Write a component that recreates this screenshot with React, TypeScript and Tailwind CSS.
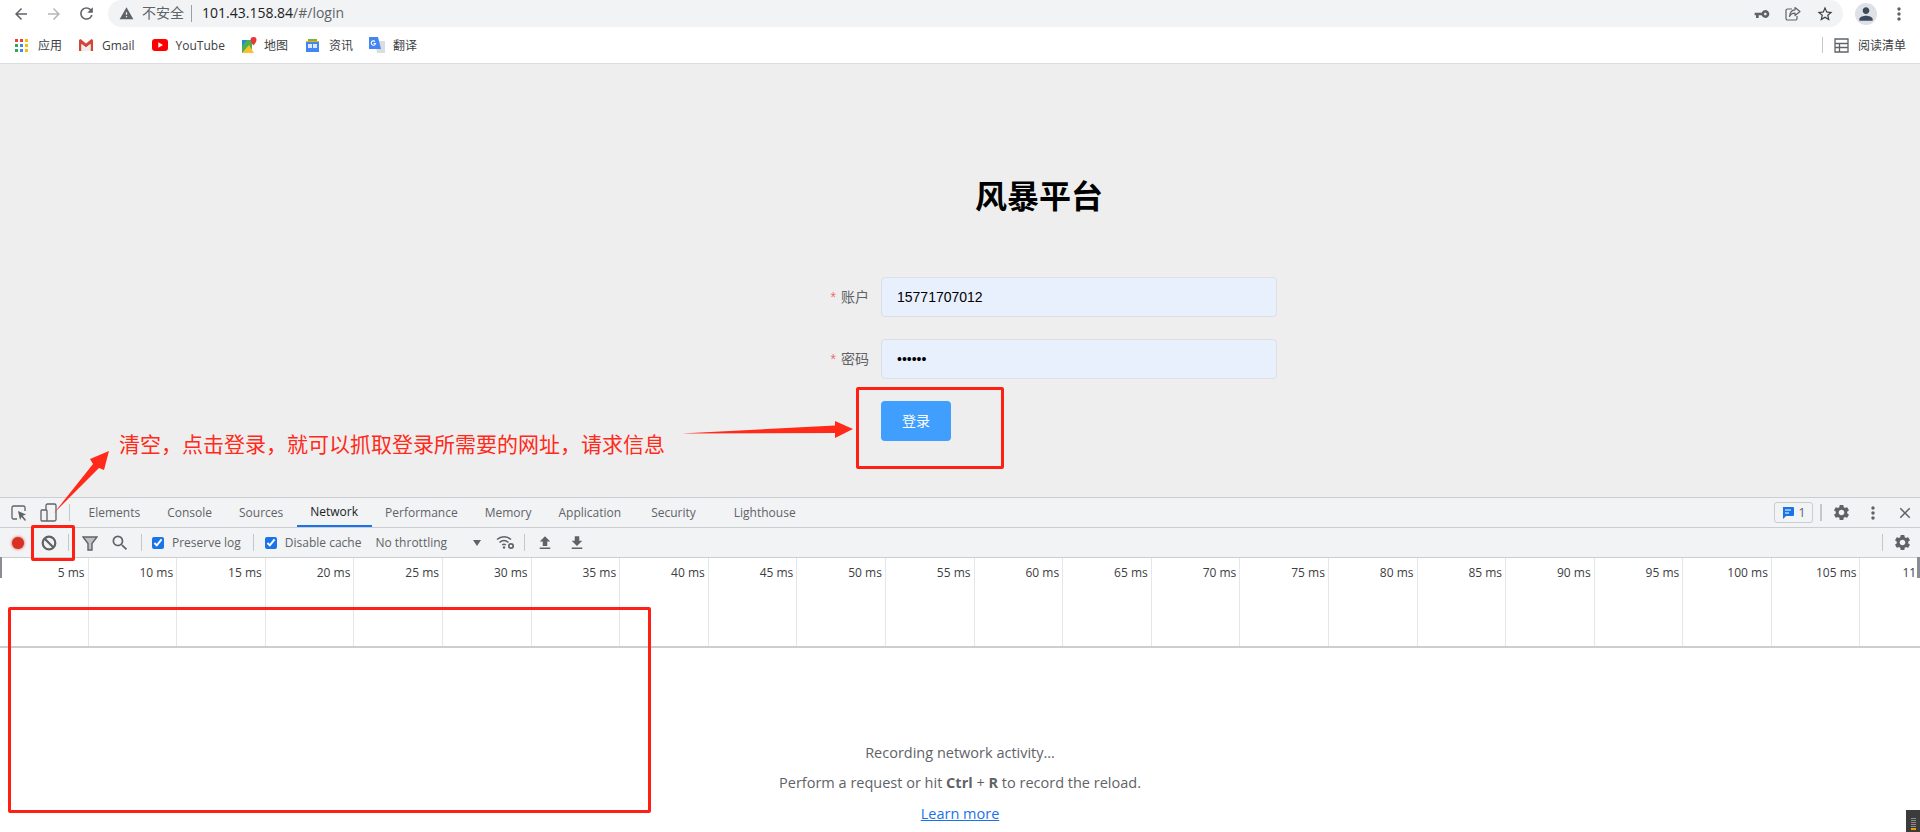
import { MdArrowBack, MdArrowForward, MdRefresh, MdWarning, MdVpnKey, MdStarBorder, MdPerson, MdSettings, MdMoreVert, MdClose, MdSearch, MdFileUpload, MdFileDownload } from "react-icons/md"

const tabs = [
  { label: "Elements", className: "" },
  { label: "Console", className: "" },
  { label: "Sources", className: "" },
  { label: "Network", className: "text-[#202124] border-b-2 border-[#1a73e8]" },
  { label: "Performance", className: "" },
  { label: "Memory", className: "" },
  { label: "Application", className: "" },
  { label: "Security", className: "ml-[3px]" },
  { label: "Lighthouse", className: "ml-[11px]" },
]

const ticks = [5, 10, 15, 20, 25, 30, 35, 40, 45, 50, 55, 60, 65, 70, 75, 80, 85, 90, 95, 100, 105]

function GmailIcon() {
  return (
    <svg width="16" height="14" viewBox="0 0 16 14">
      <path d="M1 2v11h2.500V6L8 9.500 12.500 6v7H15V2l-1.500-1L8 5.500 2.500 1z" fill="#d44638" />
      <path d="M3.500 6 8 9.500 12.500 6v7h-9z" fill="#eee" />
    </svg>
  )
}

function YoutubeIcon() {
  return (
    <svg width="16" height="12" viewBox="0 0 16 12">
      <rect width="16" height="12" rx="3" fill="#f00" />
      <path d="M6.300 3.300v5.400L11 6z" fill="#fff" />
    </svg>
  )
}

function MapsIcon() {
  return (
    <svg width="16" height="17" viewBox="0 0 16 17">
      <path d="M1 3h10v13H1z" fill="#4caf50" />
      <path d="M1 16 8 8l5 8z" fill="#fbc02d" />
      <path d="M1 3h5L1 9z" fill="#1e88e5" />
      <path d="M12.500 0a3 3 0 0 0-3 3c0 2.200 3 5.500 3 5.500s3-3.300 3-5.500a3 3 0 0 0-3-3z" fill="#e53935" />
    </svg>
  )
}

function NewsIcon() {
  return (
    <svg width="15" height="15" viewBox="0 0 15 15">
      <path d="M3 1h9v3H3z" fill="#7cb342" />
      <path d="M1 4h13v10H1z" fill="#4285f4" />
      <path d="M3 6h4v4H3zM8 6h4v4H8z" fill="#dbe8fd" />
      <path d="M1 3h13v1H1z" fill="#f9ab00" />
    </svg>
  )
}

function TranslateIcon() {
  return (
    <svg width="16" height="16" viewBox="0 0 16 16">
      <path d="M6 4h10v12H8z" fill="#dadce0" />
      <path d="M0 0h9l3 12H0z" fill="#4285f4" />
      <path d="M6 4.500a2.200 2.200 0 1 0 .6 2H4.600" fill="none" stroke="#fff" strokeWidth="1.100" />
    </svg>
  )
}

function AppsIcon() {
  const colors = ["#ea4335", "#ea4335", "#fbbc04", "#34a853", "#4285f4", "#fbbc04", "#34a853", "#4285f4", "#fbbc04"]
  return (
    <div className="grid grid-cols-3 gap-[2px] w-[13px]">
      {colors.map((c, i) => (
        <span key={i} className="block w-[3px] h-[3px]" style={{ background: c }} />
      ))}
    </div>
  )
}

function Bookmark({ icon, label, className }: { icon: React.ReactNode; label: string; className: string }) {
  return (
    <div className={`flex items-center ${className}`}>
      {icon}
      <span className="translate-y-px">{label}</span>
    </div>
  )
}

function ShareIcon() {
  return (
    <svg width="16" height="16" viewBox="0 0 16 16" fill="none" stroke="#5f6368" strokeWidth="1.200">
      <path d="M7 3H2.500A1.500 1.500 0 0 0 1 4.500v8A1.500 1.500 0 0 0 2.500 14h8a1.500 1.500 0 0 0 1.500-1.500V10" />
      <path d="M10 1.500 15 5.500l-5 4V7.200C7.500 7.200 5.500 8.200 4.500 10.500 4.800 7 6.800 4 10 3.800z" strokeLinejoin="round" />
    </svg>
  )
}

function InspectIcon() {
  return (
    <svg width="16" height="16" viewBox="0 0 16 16" fill="none">
      <path d="M6 14H2.500A1.500 1.500 0 0 1 1 12.500v-10A1.500 1.500 0 0 1 2.500 1h10A1.500 1.500 0 0 1 14 2.500V6" stroke="#5f6368" strokeWidth="1.300" />
      <path d="M7 6l8 3.500-3.300 1.200L15 15l-1 1-3.500-4L9 15z" fill="#5f6368" />
    </svg>
  )
}

function DeviceIcon() {
  return (
    <svg width="17" height="19" viewBox="0 0 17 19" fill="none" stroke="#5f6368" strokeWidth="1.300">
      <rect x="6" y="1" width="10" height="17" rx="1.500" />
      <rect x="1" y="7" width="6" height="11" rx="1" fill="#f1f3f4" />
    </svg>
  )
}

function ClearIcon() {
  return (
    <svg width="16" height="16" viewBox="0 0 16 16" fill="none" stroke="#5f6368" strokeWidth="2.200">
      <circle cx="8" cy="8" r="6.300" />
      <path d="M3.500 3.500l9 9" />
    </svg>
  )
}

function FunnelIcon() {
  return (
    <svg width="16" height="16" viewBox="0 0 16 16" fill="none">
      <path d="M1 2h14l-5 6.500V15H6V8.500z" stroke="#5f6368" strokeWidth="1.400" fill="#bdc1c6" />
    </svg>
  )
}

function WifiGearIcon() {
  return (
    <svg width="19" height="15" viewBox="0 0 19 15" fill="none">
      <path d="M1 4.500C5 .8 11 .8 15 4.500M3.500 7.500c2.800-2.500 6.200-2.500 9 0M6.200 10c1.200-1 2.400-1 3.600 0" stroke="#5f6368" strokeWidth="1.600" />
      <circle cx="8" cy="12.500" r="1.200" fill="#5f6368" />
      <circle cx="15" cy="11" r="2.200" stroke="#5f6368" strokeWidth="1.700" />
    </svg>
  )
}

function Sep({ className }: { className: string }) {
  return <div className={`w-px h-[17px] bg-[#c4c7cc] shrink-0 ${className}`} />
}

export default function App() {
  return (
    <div className="relative w-[1920px] h-[832px] overflow-hidden bg-white [font-family:'Open_Sans','Noto_Sans_CJK_SC',sans-serif] text-[#3c4043]">
      {/* Browser toolbar */}
      <div className="flex items-center h-[27px] bg-white">
        <MdArrowBack className="ml-[12px] text-[#5f6368]" size={18} />
        <MdArrowForward className="ml-[15px] text-[#b4b7bb]" size={18} />
        <MdRefresh className="ml-[14px] text-[#5f6368]" size={19} />
        <div className="flex items-center ml-[12px] w-[1735px] h-[27px] rounded-full bg-[#f1f3f4]">
          <MdWarning className="ml-[11px] text-[#5f6368]" size={15} />
          <span className="ml-[8px] -translate-y-px text-[14px] text-[#5f6368] font-['Noto_Sans_CJK_SC']">不安全</span>
          <div className="ml-[7px] w-px h-[17px] bg-[#9aa0a6]" />
          <span className="ml-[10px] -translate-y-px text-[14px] text-[#202124]">101.43.158.84<span className="text-[#5f6368]">/#/login</span></span>
          <div className="flex items-center ml-auto mr-[9px]">
            <MdVpnKey className="text-[#5f6368] -scale-x-100" size={16} />
            <div className="ml-[15px]"><ShareIcon /></div>
            <MdStarBorder className="ml-[15px] text-[#3c4043]" size={18} />
          </div>
        </div>
        <div className="flex items-center justify-center ml-[12px] w-[22px] h-[22px] rounded-full bg-[#dee1e6]">
          <MdPerson className="text-[#3c4a5e]" size={20} />
        </div>
        <MdMoreVert className="ml-[12px] text-[#5f6368]" size={20} />
      </div>

      {/* Bookmarks */}
      <div className="flex items-center h-[37px] border-b border-[#dadce0] bg-white text-[12px] text-[#3c4043]">
        <Bookmark className="ml-[15px] gap-[10px]" icon={<AppsIcon />} label="应用" />
        <Bookmark className="ml-[16px] gap-[8px]" icon={<GmailIcon />} label="Gmail" />
        <Bookmark className="ml-[17px] gap-[8px]" icon={<YoutubeIcon />} label="YouTube" />
        <Bookmark className="ml-[16px] gap-[7px]" icon={<MapsIcon />} label="地图" />
        <Bookmark className="ml-[17px] gap-[9px]" icon={<NewsIcon />} label="资讯" />
        <Bookmark className="ml-[16px] gap-[8px]" icon={<TranslateIcon />} label="翻译" />
        <div className="ml-auto mr-[14px] flex items-center">
          <div className="w-px h-[16px] bg-[#c4c7cc] mr-[11px]" />
          <svg width="15" height="15" viewBox="0 0 15 15" fill="none" stroke="#5f6368" strokeWidth="1.300">
            <path d="M1 1h13v13H1zM1 5.500h13M1 9.500h13M5.500 5.500V14" />
          </svg>
          <span className="ml-[9px] translate-y-px">阅读清单</span>
        </div>
      </div>

      {/* Login page */}
      <div className="h-[433px] bg-[#eeeeee] [font-family:'Liberation_Sans','Noto_Sans_CJK_SC',sans-serif]">
        <div className="ml-[801px] w-[476px] pt-[113px]">
          <h1 className="text-center text-[32px] leading-[40px] font-bold text-black">风暴平台</h1>
          <div className="mt-[60px] flex items-center">
            <label className="w-[68px] text-right text-[14px] text-[#606266]"><span className="text-[#f56c6c] mr-[5px]">*</span>账户</label>
            <input readOnly value="15771707012" className="ml-[12px] w-[396px] h-[40px] px-[15px] rounded-[4px] border border-[#dcdfe6] bg-[#e8f0fe] text-[14px] text-black outline-none" />
          </div>
          <div className="mt-[22px] flex items-center">
            <label className="w-[68px] text-right text-[14px] text-[#606266]"><span className="text-[#f56c6c] mr-[5px]">*</span>密码</label>
            <input readOnly type="password" value="123456" className="ml-[12px] w-[396px] h-[40px] px-[15px] rounded-[4px] border border-[#dcdfe6] bg-[#e8f0fe] text-[14px] text-black outline-none" />
          </div>
          <button className="mt-[22px] ml-[80px] w-[70px] h-[40px] rounded-[4px] bg-[#409eff] text-[14px] text-white">登录</button>
        </div>
      </div>

      {/* DevTools */}
      <div className="border-t border-[#cbcdd1] bg-[#f1f3f4] text-[12px] text-[#5f6368]">
        <div className="flex items-center h-[29px]">
          <div className="ml-[11px] shrink-0"><InspectIcon /></div>
          <div className="ml-[13px] shrink-0"><DeviceIcon /></div>
          <Sep className="ml-[12px]" />
          <div className="flex h-full ml-[5px]">
            {tabs.map((t) => (
              <div key={t.label} className={`flex items-center px-[13.500px] ${t.className}`}>{t.label}</div>
            ))}
          </div>
          <div className="flex items-center ml-auto">
            <div className="flex items-center justify-center gap-[5px] w-[39px] h-[21px] rounded-[3px] border border-[#c9ccd1] text-[12px]">
              <svg width="12" height="12" viewBox="0 0 12 12"><path d="M1 0h10a1 1 0 0 1 1 1v7a1 1 0 0 1-1 1H4l-3 3V1a1 1 0 0 1 0-1z" fill="#1a73e8" /><path d="M3 3h6M3 6h4" stroke="#fff" /></svg>
              1
            </div>
            <div className="ml-[7px] w-[2px] h-[17px] bg-[#c4c7cc]" />
            <MdSettings className="ml-[10px]" size={19} />
            <MdMoreVert className="ml-[12px]" size={20} />
            <MdClose className="ml-[13px] mr-[6px]" size={18} />
          </div>
        </div>
        <div className="flex items-center h-[30px] border-t border-[#cbcdd1]">
          <div className="ml-[12px] w-[12px] h-[12px] rounded-full bg-[#d93025] shadow-[0_0_3px_#d93025]" />
          <div className="ml-[17px] shrink-0"><ClearIcon /></div>
          <Sep className="ml-[11px]" />
          <div className="ml-[13px] shrink-0"><FunnelIcon /></div>
          <MdSearch className="ml-[12px] shrink-0" size={20} />
          <Sep className="ml-[11px]" />
          <input type="checkbox" readOnly checked className="ml-[10px] w-[12px] h-[12px] accent-[#1a73e8]" />
          <span className="ml-[8px]">Preserve log</span>
          <Sep className="ml-[12px]" />
          <input type="checkbox" readOnly checked className="ml-[11px] w-[12px] h-[12px] accent-[#1a73e8]" />
          <span className="ml-[8px]">Disable cache</span>
          <span className="ml-[14px]">No throttling</span>
          <div className="ml-[26px] w-0 h-0 border-x-[4px] border-x-transparent border-t-[6px] border-t-[#5f6368]" />
          <div className="ml-[15px] shrink-0"><WifiGearIcon /></div>
          <Sep className="ml-[9px]" />
          <MdFileUpload className="ml-[11px]" size={18} />
          <MdFileDownload className="ml-[14px]" size={18} />
          <Sep className="ml-auto" />
          <MdSettings className="ml-[10px] mr-[8px]" size={19} />
        </div>
      </div>

      {/* Timeline */}
      <div className="flex h-[91px] border-t border-b-2 border-[#cbcdd1] bg-white text-[12px] text-[#3c4043]">
        {ticks.map((t) => (
          <div key={t} className="w-[88.600px] shrink-0 h-full border-r border-[#e4e6e9] pt-[6px] pr-[3px] text-right leading-[18px]">{t} ms</div>
        ))}
        <div className="pl-[42px] pt-[6px] leading-[18px]">11</div>
      </div>

      {/* Empty state */}
      <div className="flex flex-col items-center pt-[95px] text-[14.500px] text-[#5f6368] leading-[20px]">
        <p>Recording network activity…</p>
        <p className="mt-[10px]">Perform a request or hit <b>Ctrl</b> + <b>R</b> to record the reload.</p>
        <a className="mt-[11px] text-[#1a73e8] underline">Learn more</a>
      </div>

      {/* Overview grips and corner widget */}
      <div className="absolute left-0 top-[557px] w-[2px] h-[21px] bg-[#8a8d91]" />
      <div className="absolute right-0 top-[557px] w-[3px] h-[21px] bg-[#8a8d91]" />
      <div className="absolute left-[1906px] top-[810px] w-[14px] h-[22px] bg-[#3c3c3c] flex flex-col items-center justify-end gap-[1px] pb-[2px]">
        {[0, 1, 2, 3, 4].map((i) => (
          <div key={i} className="w-[5px] h-px bg-[#8a8a8a]" />
        ))}
        <div className="w-[5px] h-[2px] bg-[#f29900]" />
      </div>

      {/* Annotations */}
      <svg className="absolute inset-0 pointer-events-none" width="1920" height="832">
        <path d="M54 513 93 464 90 459 109 451 104 470 99 468z" fill="#ff2a1a" />
        <path d="M681 433.500 835 425.500V421L853 429 835 438V433z" fill="#ff2a1a" />
      </svg>
      <span className="absolute left-[119px] top-[428px] text-[21px] leading-[30px] text-[#ff2a1a] whitespace-nowrap [font-family:'Noto_Sans_CJK_SC',sans-serif]">清空，点击登录，就可以抓取登录所需要的网址，请求信息</span>
      <div className="absolute left-[856px] top-[387px] w-[148px] h-[82px] rounded-[2px] border-[3px] border-[#ff2015]" />
      <div className="absolute left-[31px] top-[525px] w-[44px] h-[36px] rounded-[2px] border-[3px] border-[#ff2015]" />
      <div className="absolute left-[8px] top-[607px] w-[643px] h-[206px] rounded-[2px] border-[3px] border-[#ff2015]" />
    </div>
  )
}
